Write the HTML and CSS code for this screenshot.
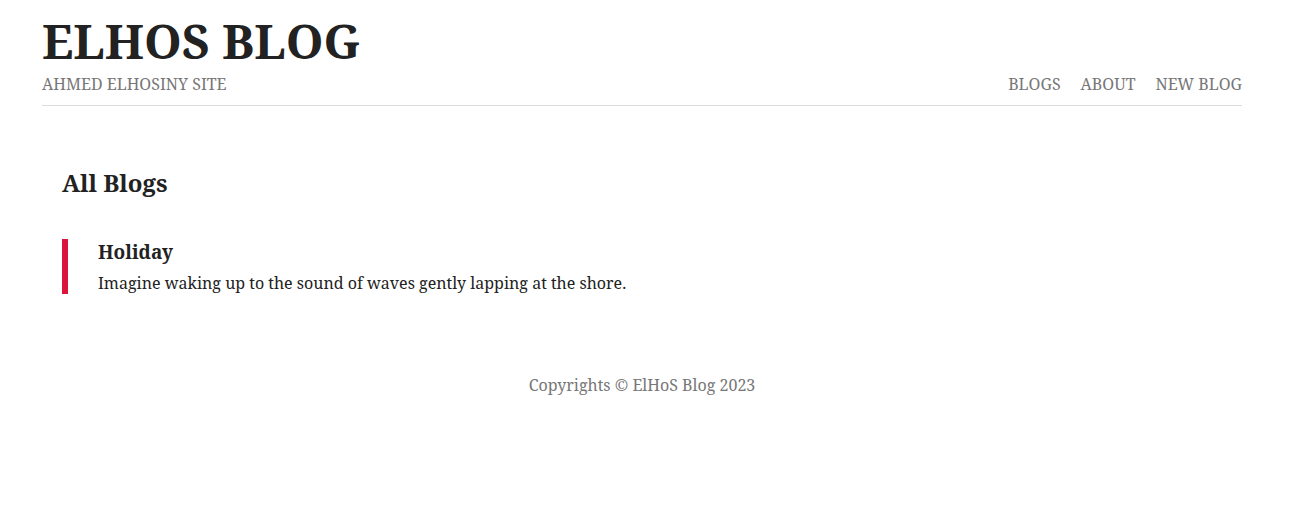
FILE: index.html
```html
<!DOCTYPE html>
<html lang="en">
<head>
<meta charset="utf-8">
<title>Elhos Blog</title>
<link rel="stylesheet" href="styles.css">
</head>
<body>
<div class="page">
<header class="site-header">
<div class="brand">
<h1 class="brand-title"><a href="#">Elhos Blog</a></h1>
<p class="brand-tagline">Ahmed Elhosiny Site</p>
</div>
<nav>
<ul class="menu">
<li><a href="#">Blogs</a></li>
<li><a href="#">About</a></li>
<li><a href="#">New Blog</a></li>
</ul>
</nav>
</header>
<main class="content">
<h2 class="content-title">All Blogs</h2>
<article class="post">
<h3 class="post-title"><a href="#">Holiday</a></h3>
<p class="post-snippet">Imagine waking up to the sound of waves gently lapping at the shore.</p>
</article>
</main>
<footer class="site-footer">Copyrights © ElHoS Blog 2023</footer>
</div>
</body>
</html>
```
FILE: styles.css
```css
body {
  margin: 0;
  padding: 20px 36px 20px 20px;
  font-family: "Noto Serif", "Droid Serif", "DejaVu Serif", "Liberation Serif", serif;
  font-size: 16px;
  line-height: 22px;
  color: #222;
  background: #fff;
}

h1, h2, h3, p, ul {
  margin: 0;
  padding: 0;
}

a {
  color: inherit;
  text-decoration: none;
}

.page {
  max-width: 1200px;
  margin: 0 auto;
}

.site-header {
  display: flex;
  justify-content: space-between;
  align-items: flex-end;
  padding-bottom: 10px;
  border-bottom: 1px solid #ddd;
  color: #777;
  text-transform: uppercase;
}

.brand-title {
  font-size: 48px;
  line-height: 42px;
  padding-bottom: 11px;
  color: #222;
}

.menu {
  display: flex;
  gap: 20px;
  list-style: none;
}

.content {
  padding: 60px 20px 80px;
}

.content-title {
  font-size: 24px;
  line-height: 33px;
  margin-bottom: 40px;
}

.post {
  padding-left: 30px;
  border-left: 6px solid crimson;
}

.post-title {
  font-size: 19px;
  line-height: 26px;
  padding-bottom: 7px;
}

.site-footer {
  text-align: center;
  color: #777;
}
```
